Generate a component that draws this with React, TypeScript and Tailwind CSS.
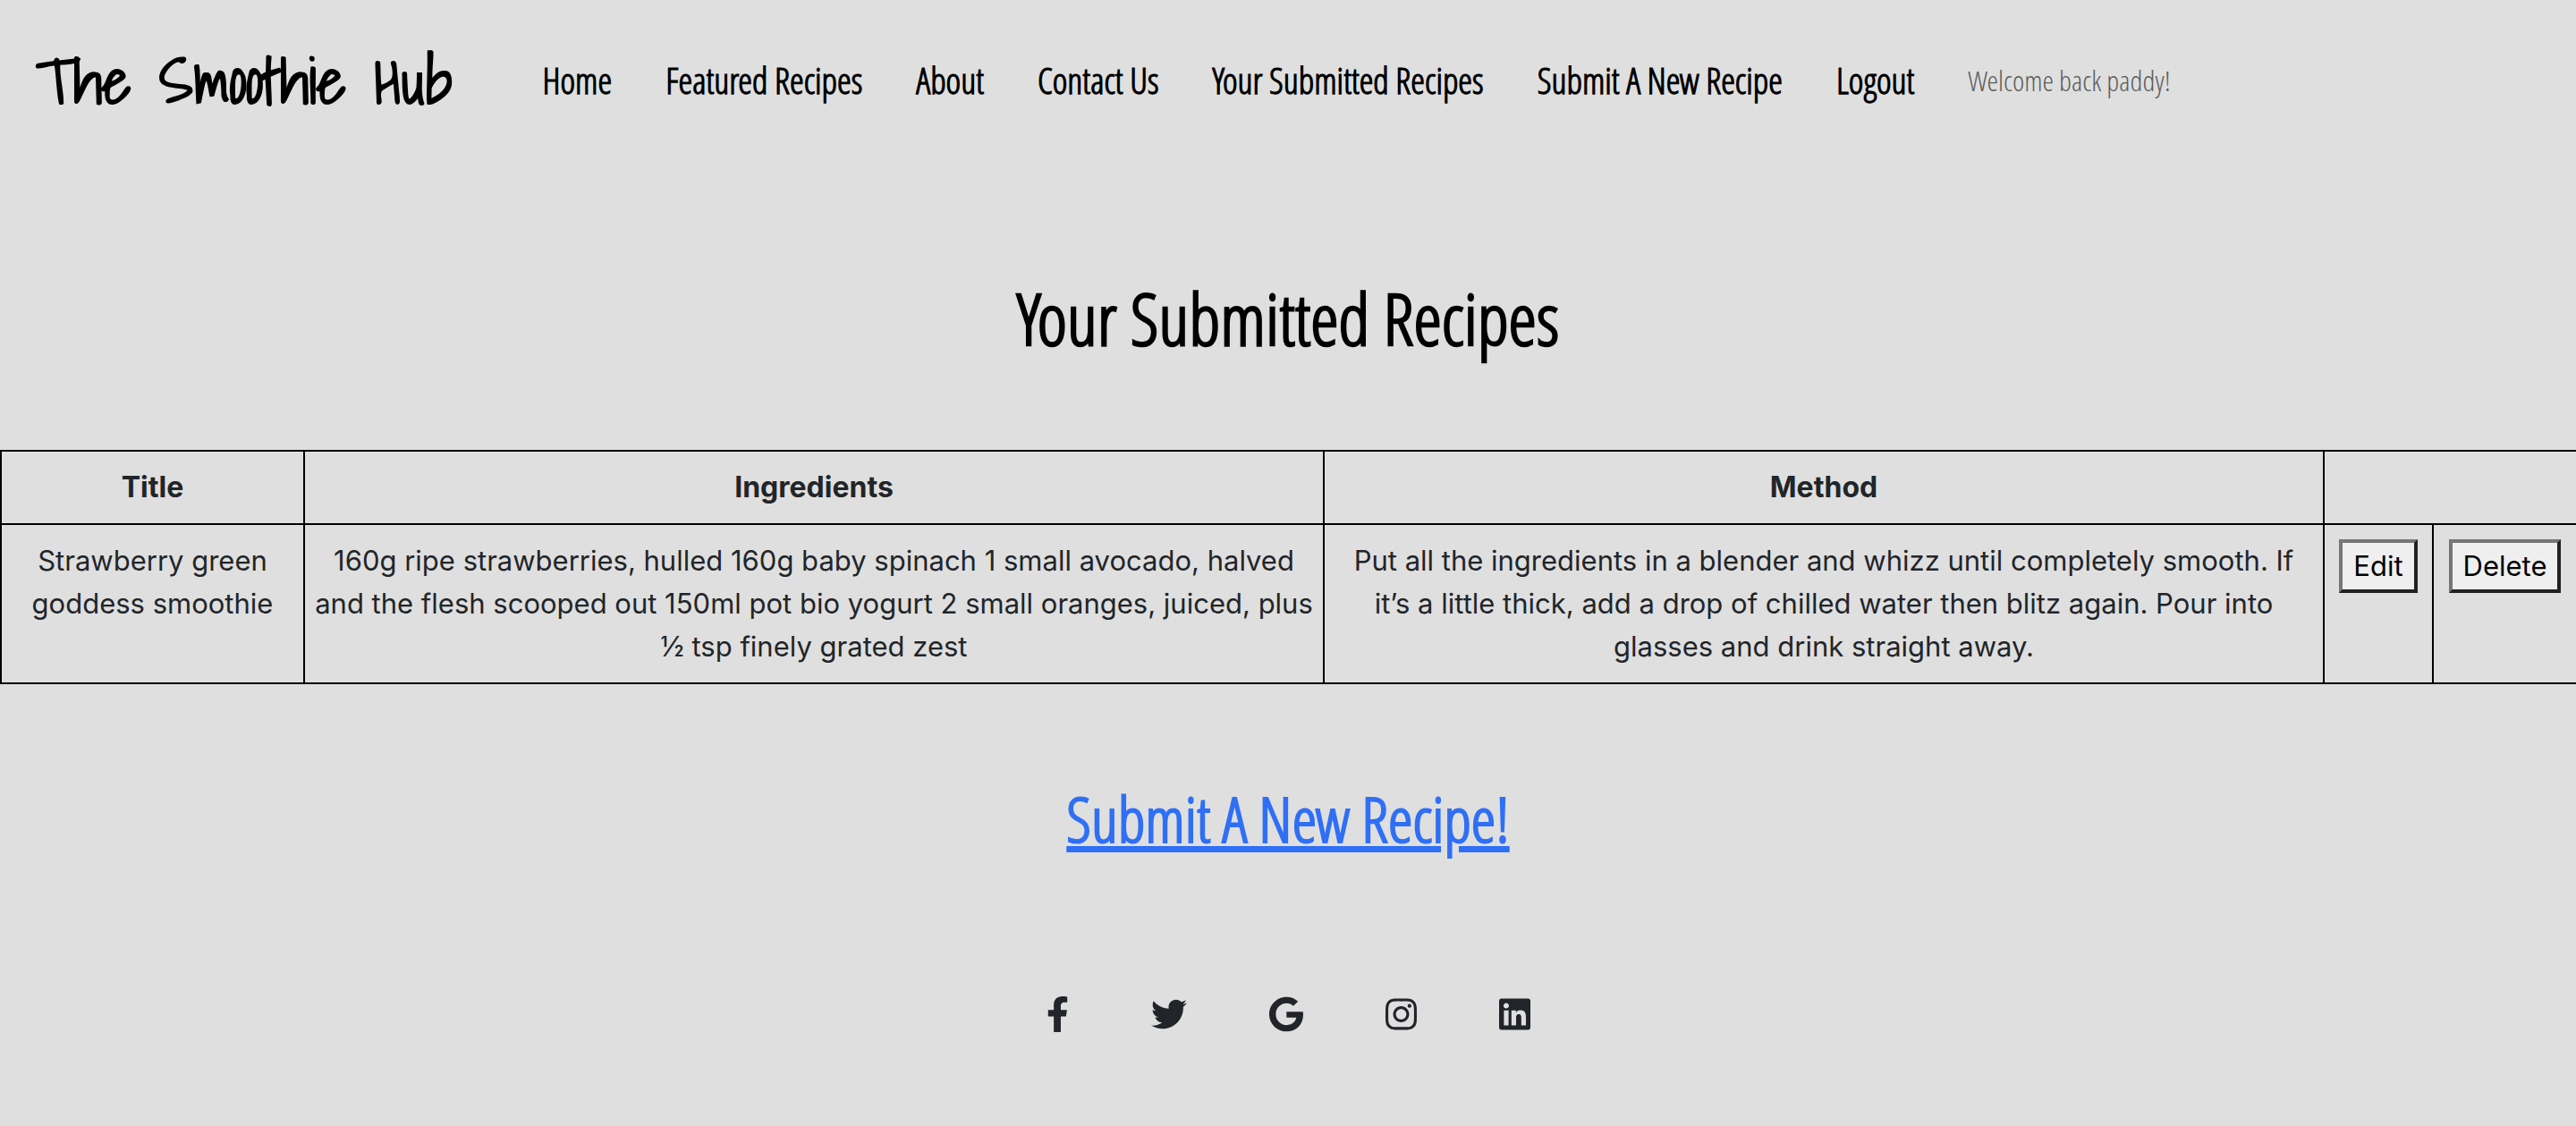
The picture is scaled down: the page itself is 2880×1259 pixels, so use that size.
import { FaFacebookF, FaGoogle, FaInstagram, FaLinkedin, FaTwitter } from "react-icons/fa";

const navLinks = [
  "Home",
  "Featured Recipes",
  "About",
  "Contact Us",
  "Your Submitted Recipes",
  "Submit A New Recipe",
  "Logout",
];

const recipes = [
  {
    title: "Strawberry green goddess smoothie",
    ingredients:
      "160g ripe strawberries, hulled 160g baby spinach 1 small avocado, halved and the flesh scooped out 150ml pot bio yogurt 2 small oranges, juiced, plus ½ tsp finely grated zest",
    method:
      "Put all the ingredients in a blender and whizz until completely smooth. If it’s a little thick, add a drop of chilled water then blitz again. Pour into glasses and drink straight away.",
  },
];

const socials = [
  { label: "Facebook", Icon: FaFacebookF, size: "h-10 w-[25px]" },
  { label: "Twitter", Icon: FaTwitter, size: "h-10 w-[40px]" },
  { label: "Google", Icon: FaGoogle, size: "h-10 w-[38px]" },
  { label: "Instagram", Icon: FaInstagram, size: "h-10 w-[35px]" },
  { label: "LinkedIn", Icon: FaLinkedin, size: "h-10 w-[35px]" },
];

function Header() {
  return (
    <header className="flex items-center px-10 py-8 text-black">
      <a
        href="#"
        className="mr-[100px] font-['Shadows_Into_Light',cursive] text-[70px] leading-[116px] font-bold whitespace-nowrap"
      >
        The Smoothie Hub
      </a>
      <nav className="flex items-center gap-[60px] font-['Open_Sans_Condensed_Light',sans-serif] whitespace-nowrap">
        {navLinks.map((label) => (
          <a key={label} href="#" className="text-[40px] leading-[60px] font-bold">
            {label}
          </a>
        ))}
        <span className="text-[32px] leading-[48px] text-[#5c5c5c]">Welcome back paddy!</span>
      </nav>
    </header>
  );
}

function ActionButton({ label }: { label: string }) {
  return (
    <button
      type="button"
      className="border-4 border-t-[#767676] border-r-[#212121] border-b-[#212121] border-l-[#767676] bg-[#efefef] px-3 py-0.5 leading-[48px] text-black"
    >
      {label}
    </button>
  );
}

function RecipeTable() {
  return (
    <table className="w-full table-fixed border-collapse border-2 border-r-0 border-black text-center font-['Inter',sans-serif] text-[31px] leading-[48px] text-[#212529]">
      <colgroup>
        <col className="w-[339px]" />
        <col className="w-[1140px]" />
        <col />
        <col className="w-[122px]" />
        <col className="w-[160px]" />
      </colgroup>
      <thead className="text-[32px]">
        <tr className="border-b-2 border-black">
          <th className="border-r-2 border-black p-4 font-bold">Title</th>
          <th className="border-r-2 border-black p-4 font-bold">Ingredients</th>
          <th className="border-r-2 border-black p-4 font-bold">Method</th>
          <th colSpan={2} className="p-4" />
        </tr>
      </thead>
      <tbody>
        {recipes.map((recipe) => (
          <tr key={recipe.title} className="align-top">
            <td className="border-r-2 border-black p-4">{recipe.title}</td>
            <td className="border-r-2 border-black px-2 py-4">{recipe.ingredients}</td>
            <td className="border-r-2 border-black p-4">{recipe.method}</td>
            <td className="border-r-2 border-black p-4">
              <ActionButton label="Edit" />
            </td>
            <td className="p-4">
              <ActionButton label="Delete" />
            </td>
          </tr>
        ))}
      </tbody>
    </table>
  );
}

export default function App() {
  return (
    <div className="min-h-screen bg-[#dfdfdf]">
      <Header />
      <main className="flex flex-col items-center">
        <h1 className="mt-[127px] mb-[100px] font-['Open_Sans_Condensed_Light',sans-serif] text-[80px] leading-[96px] font-bold text-black">
          Your Submitted Recipes
        </h1>
        <RecipeTable />
        <a
          href="#"
          className="mt-24 font-['Open_Sans_Condensed_Light',sans-serif] text-[70px] leading-[108px] font-bold text-[#2f6ff5] underline"
        >
          Submit A New Recipe!
        </a>
      </main>
      <footer className="mt-[145px] flex justify-center gap-[92px] pb-20 text-[#212529]">
        {socials.map(({ label, Icon, size }) => (
          <a key={label} href="#" aria-label={label}>
            <Icon className={size} />
          </a>
        ))}
      </footer>
    </div>
  );
}
